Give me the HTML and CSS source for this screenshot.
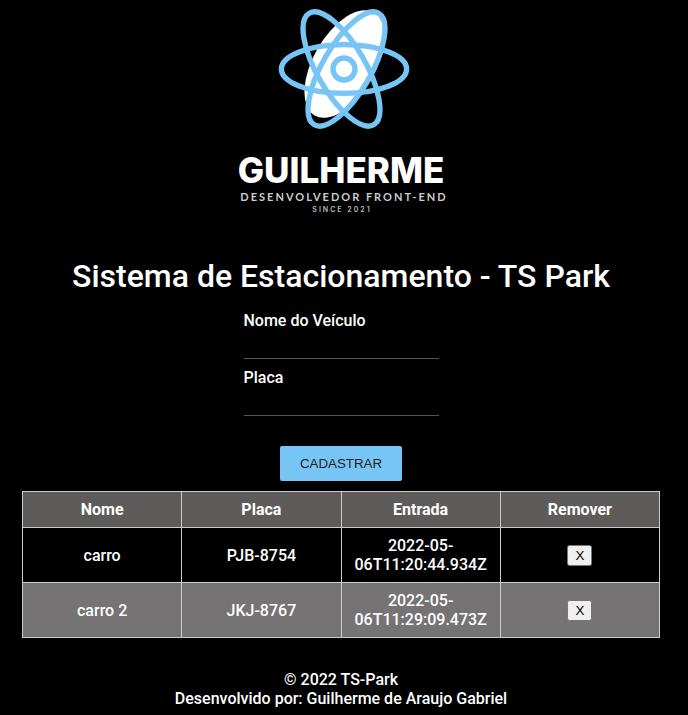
FILE: index.html
```html
<!DOCTYPE html>
<html lang="pt-BR">
<head>
  <meta charset="utf-8">
  <meta name="viewport" content="width=device-width, initial-scale=1">
  <title>TS Park</title>
  <link rel="stylesheet" href="styles.css">
</head>
<body>
  <header class="logo">
    <svg class="logo-mark" viewBox="-67 -61 134 122" aria-hidden="true">
      <ellipse cx="0.5" cy="-5" rx="59.5" ry="31" fill="#fff" transform="rotate(-60 0.5 -5)"/>
      <g fill="none" stroke="#76c5f5" stroke-width="5.4">
        <ellipse rx="62.6" ry="24.4"/>
        <ellipse rx="64.4" ry="24.2" transform="translate(-2.5 0) rotate(60)"/>
        <ellipse rx="64.4" ry="24.2" transform="translate(2.5 0) rotate(-60)"/>
        <circle r="11"/>
      </g>
    </svg>
    <p class="logo-name">GUILHERME</p>
    <p class="logo-role">DESENVOLVEDOR FRONT-END</p>
    <p class="logo-since">SINCE 2021</p>
  </header>
  <main>
    <h1 class="title">Sistema de Estacionamento - TS Park</h1>
    <form class="form">
      <div class="field">
        <label for="nome">Nome do Veículo</label>
        <input id="nome" type="text">
      </div>
      <div class="field">
        <label for="placa">Placa</label>
        <input id="placa" type="text">
      </div>
      <button class="submit" type="button">CADASTRAR</button>
    </form>
    <table class="cars">
      <thead>
        <tr><th>Nome</th><th>Placa</th><th>Entrada</th><th>Remover</th></tr>
      </thead>
      <tbody>
        <tr><td>carro</td><td>PJB-8754</td><td>2022-05-06T11:20:44.934Z</td><td><button class="remove" type="button">X</button></td></tr>
        <tr><td>carro 2</td><td>JKJ-8767</td><td>2022-05-06T11:29:09.473Z</td><td><button class="remove" type="button">X</button></td></tr>
      </tbody>
    </table>
  </main>
  <footer class="footer">
    <p>© 2022 TS-Park</p>
    <p>Desenvolvido por: Guilherme de Araujo Gabriel</p>
  </footer>
</body>
</html>
```
FILE: styles.css
```css
* {
  box-sizing: border-box;
}

body {
  margin: 0;
  padding: 8px 28px 8px 22px;
  background: #000;
  color: #fff;
  font-family: Roboto, sans-serif;
  font-size: 16px;
  font-weight: 500;
  line-height: 19px;
}

p {
  margin: 0;
}

.logo {
  display: flex;
  flex-direction: column;
  align-items: center;
  padding-left: 6px;
}

.logo-mark {
  width: 134px;
  height: 122px;
}

.logo-name {
  margin-top: 20px;
  padding-right: 6px;
  font-family: Inter, sans-serif;
  font-size: 35px;
  font-weight: 800;
  line-height: 40px;
}

.logo-role {
  color: #ccc;
  font-family: Lato, sans-serif;
  font-size: 11px;
  font-weight: 700;
  letter-spacing: 2px;
  line-height: 14px;
}

.logo-since {
  padding-right: 4px;
  color: #bbb;
  font-family: Inter, sans-serif;
  font-size: 7px;
  font-weight: 600;
  letter-spacing: 2px;
  line-height: 12px;
}

.title {
  margin: 41px 0 16px;
  font-size: 32px;
  font-weight: 500;
  line-height: 38px;
  text-align: center;
}

.form {
  display: flex;
  flex-direction: column;
  align-items: center;
  gap: 9px;
}

.field {
  display: flex;
  flex-direction: column;
  width: 195px;
}

.field input {
  height: 29px;
  padding: 4px 0;
  border: 0;
  border-bottom: 1px solid #555;
  background: transparent;
  color: #fff;
  font: inherit;
}

.submit {
  margin: 21px 0 10px;
  padding: 10px 20px;
  border: 0;
  border-radius: 2px;
  background: #76c5f5;
  color: #222;
  font-family: "Liberation Sans", Arial, sans-serif;
  line-height: 15px;
}

.cars {
  width: 100%;
  table-layout: fixed;
  border-collapse: collapse;
  text-align: center;
}

.cars th,
.cars td {
  padding: 8px;
  border: 1px solid #ccc;
}

.cars th {
  background: #5d5c5a;
  font-weight: 700;
}

.cars tbody tr:nth-child(even) {
  background: #757374;
}

.remove {
  font-family: "Liberation Sans", Arial, sans-serif;
}

.footer {
  margin-top: 32px;
  text-align: center;
}
```
